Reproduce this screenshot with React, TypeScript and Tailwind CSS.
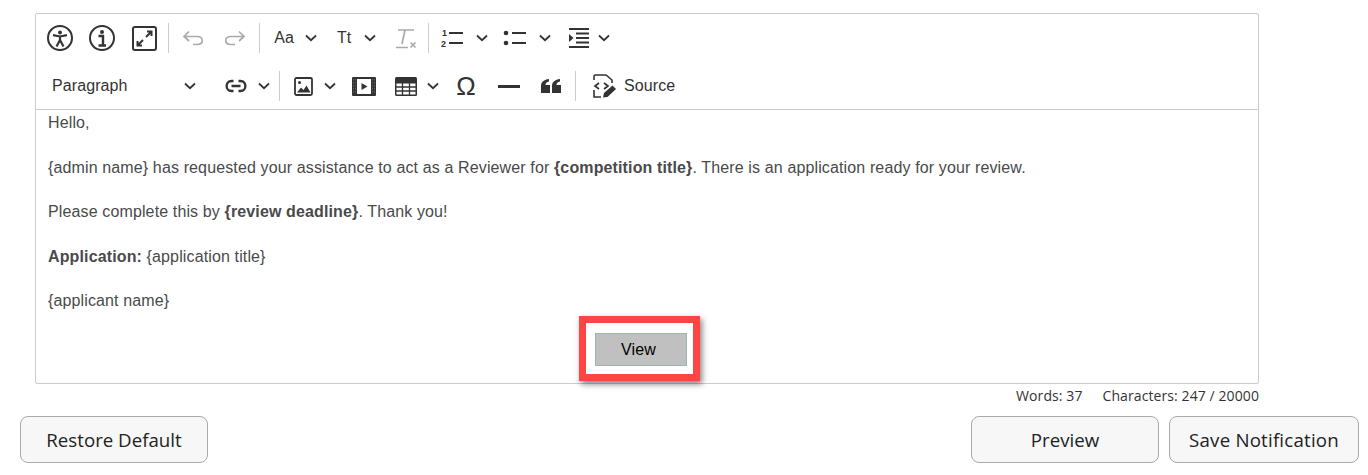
const Chevron = ({ className = "" }: { className?: string }) => (
  <svg viewBox="0 0 12 8" className={`w-[12px] h-[8px] ${className}`} fill="none" stroke="#333" strokeWidth="1.8">
    <path d="M1 1.5 L6 6.2 L11 1.5" />
  </svg>
);

const Sep = ({ className = "" }: { className?: string }) => <div className={`w-px h-[30px] bg-[#ccc] ${className}`} />;

const Slot = ({ className, children }: { className: string; children?: React.ReactNode }) => (
  <div className={`flex items-center justify-center shrink-0 h-[36px] ${className}`}>{children}</div>
);

const Icon = ({ w, h, children }: { w: number; h: number; children: React.ReactNode }) => (
  <svg width={w} height={h} viewBox={`0 0 ${w} ${h}`} fill="none">
    {children}
  </svg>
);

const DARK = "#333";
const GREY = "#aaa";

function EditorToolbar() {
  return (
    <div className="border-b border-[#ccc] h-[96px] flex flex-col">
      {/* first row */}
      <div className="flex items-center h-[36px] mt-[6px] pl-[3px]">
        <Slot className="w-[42px]">
          <Icon w={26} h={26}>
            <circle cx="13" cy="13" r="12" stroke={DARK} strokeWidth="2" />
            <circle cx="13" cy="7.5" r="2" fill={DARK} />
            <path d="M6 10.200 L13 11.500 L20 10.200 M13 11.500 V15 M13 15 L9.500 21.500 M13 15 L16.500 21.500" stroke={DARK} strokeWidth="2.200" />
          </Icon>
        </Slot>
        <Slot className="w-[42px]">
          <Icon w={26} h={26}>
            <circle cx="13" cy="13" r="12" stroke={DARK} strokeWidth="2" />
            <circle cx="13" cy="7" r="2" fill={DARK} />
            <path d="M9.500 11 H14 V20 M9.500 20.500 H17" stroke={DARK} strokeWidth="2.400" />
          </Icon>
        </Slot>
        <Slot className="w-[42px]">
          <Icon w={25} h={25}>
            <rect x="1" y="1" width="23" height="23" rx="2" stroke={DARK} strokeWidth="2" />
            <path d="M14 11 L19 6 M15 5.500 H19.500 V10 M11 14 L6 19 M5.500 15 V19.500 H10" stroke={DARK} strokeWidth="2" />
          </Icon>
        </Slot>
        <Sep className="ml-[3px]" />
        <Slot className="w-[42px] ml-[3px]">
          <Icon w={22} h={16}>
            <path d="M7 1.500 L2 6.500 L7 11 M2 6.500 H15 C22 6.500 22 14.500 15 14.500 H11" stroke={GREY} strokeWidth="1.700" />
          </Icon>
        </Slot>
        <Slot className="w-[42px]">
          <Icon w={22} h={16}>
            <path d="M15 1.500 L20 6.500 L15 11 M20 6.500 H7 C0 6.500 0 14.500 7 14.500 H11" stroke={GREY} strokeWidth="1.700" />
          </Icon>
        </Slot>
        <Sep className="ml-[3px]" />
        <Slot className="w-[38px] ml-[5px] font-['Liberation_Sans',sans-serif] text-[16px] text-[#333] font-medium">Aa</Slot>
        <Slot className="w-[20px] ml-[-2px]">
          <Chevron />
        </Slot>
        <Slot className="w-[28px] ml-[9px] font-['Liberation_Sans',sans-serif] text-[16px] text-[#333] font-medium">Tt</Slot>
        <Slot className="w-[20px] ml-[2px]">
          <Chevron />
        </Slot>
        <Slot className="w-[40px] ml-[6px]">
          <Icon w={24} h={22}>
            <path d="M4 3 H20 M11 3 L8 17" stroke={GREY} strokeWidth="1.700" />
            <path d="M2 20.500 H14" stroke={GREY} strokeWidth="1.500" />
            <path d="M16.500 15.500 L21.500 20.500 M21.500 15.500 L16.500 20.500" stroke={GREY} strokeWidth="1.700" />
          </Icon>
        </Slot>
        <Sep className="ml-[2px]" />
        <Slot className="w-[24px] ml-[12px]">
          <Icon w={24} h={20}>
            <text x="1" y="8" fontSize="9" fontWeight="700" fontFamily="Liberation Sans" fill={DARK}>1</text>
            <text x="0" y="19" fontSize="9" fontWeight="700" fontFamily="Liberation Sans" fill={DARK}>2</text>
            <path d="M8 5 H22 M8 15 H22" stroke={DARK} strokeWidth="2" />
          </Icon>
        </Slot>
        <Slot className="w-[20px] ml-[7px]">
          <Chevron />
        </Slot>
        <Slot className="w-[24px] ml-[11px]">
          <Icon w={24} h={20}>
            <circle cx="3" cy="5" r="2.300" fill={DARK} />
            <circle cx="3" cy="15" r="2.300" fill={DARK} />
            <path d="M9 5 H23 M9 15 H23" stroke={DARK} strokeWidth="2" />
          </Icon>
        </Slot>
        <Slot className="w-[20px] ml-[8px]">
          <Chevron />
        </Slot>
        <Slot className="w-[24px] ml-[12px]">
          <Icon w={20} h={20}>
            <path d="M0 1 H20 M7 5.500 H20 M7 10 H20 M7 14.500 H20 M0 19 H20" stroke={DARK} strokeWidth="2" />
            <path d="M0 6 L4.500 10 L0 14 Z" fill={DARK} />
          </Icon>
        </Slot>
        <Slot className="w-[20px] ml-[3px]">
          <Chevron />
        </Slot>
      </div>
      {/* second row */}
      <div className="flex items-center h-[36px] mt-[12px] pl-[16px]">
        <Slot className="w-[134px] justify-start! font-['Liberation_Sans',sans-serif] text-[16px] tracking-[0.1px] text-[#333]">Paragraph</Slot>
        <Slot className="w-[20px] ml-[-6px]">
          <Chevron />
        </Slot>
        <Slot className="w-[26px] ml-[23px]">
          <Icon w={22} h={14}>
            <path d="M8.500 2 H6.500 C0 2 0 12 6.500 12 H8.500 M13.500 2 H15.500 C22 2 22 12 15.500 12 H13.500 M6.500 7 H15.500" stroke={DARK} strokeWidth="2.300" />
          </Icon>
        </Slot>
        <Slot className="w-[20px] ml-[5px]">
          <Chevron />
        </Slot>
        <Sep className="ml-[5px]" />
        <Slot className="w-[20px] ml-[13px]">
          <Icon w={19} h={19}>
            <rect x="1" y="1" width="17" height="17" rx="1.500" stroke={DARK} strokeWidth="1.800" />
            <circle cx="5.500" cy="5.500" r="1.500" fill={DARK} />
            <path d="M3 15.500 L7 10.500 L9.500 13 L12.500 8.500 L16.500 15.500 Z" fill={DARK} />
          </Icon>
        </Slot>
        <Slot className="w-[20px] ml-[7px]">
          <Chevron />
        </Slot>
        <Slot className="w-[24px] ml-[12px]">
          <Icon w={24} h={19}>
            <rect x="0" y="0" width="24" height="19" rx="1" fill={DARK} />
            <rect x="5" y="2" width="14" height="15" fill="#fff" />
            <path d="M1.500 2 V17 M3.500 2 V17 M20.500 2 V17 M22.500 2 V17" stroke="#777" strokeWidth="0.600" strokeDasharray="1.500 1.500" />
            <path d="M9.500 6 L15.500 9.500 L9.500 13 Z" fill={DARK} />
          </Icon>
        </Slot>
        <Slot className="w-[22px] ml-[19px]">
          <Icon w={22} h={19}>
            <rect x="0" y="0" width="22" height="19" rx="1.500" fill={DARK} />
            <path d="M1.500 6.500 H20.500 V17.500 H1.500 Z" fill="#fff" />
            <path d="M1 10 H21 M1 14 H21 M7.500 6 V18 M14.500 6 V18" stroke={DARK} strokeWidth="1.300" />
          </Icon>
        </Slot>
        <Slot className="w-[20px] ml-[6px]">
          <Chevron />
        </Slot>
        <Slot className="w-[24px] ml-[11px] font-['Liberation_Sans',sans-serif] text-[26px] text-[#333]">Ω</Slot>
        <Slot className="w-[22px] ml-[20px]">
          <div className="w-[22px] h-[3px] bg-[#333]" />
        </Slot>
        <Slot className="w-[20px] ml-[21px]">
          <Icon w={20} h={16}>
            <path d="M0 15 V8 C0 4 3 1.500 8 1 V3.500 C5.500 4 4.500 5 4.500 7 H9 V15 Z M11 15 V8 C11 4 14 1.500 19 1 V3.500 C16.500 4 15.500 5 15.500 7 H20 V15 Z" fill={DARK} />
          </Icon>
        </Slot>
        <Sep className="ml-[14px]" />
        <Slot className="w-[26px] ml-[15px]">
          <Icon w={25} h={26}>
            <path d="M2 7 V3 L3 2 H14 L20 7 V10 M2 17 V24 H9" stroke={DARK} strokeWidth="1.600" />
            <path d="M7 10 L3 13 L7 16 M12 10 L16 13 L12 16" stroke={DARK} strokeWidth="1.700" />
            <path d="M11 24.500 L12 20 L20.500 12.500 L24 16 L15.500 24 Z" fill={DARK} />
          </Icon>
        </Slot>
        <div className="ml-[7px] font-['Liberation_Sans',sans-serif] text-[16px] tracking-[0.1px] text-[#333]">Source</div>
      </div>
    </div>
  );
}

export default function App() {
  return (
    <div className="w-[1368px] h-[475px] bg-white overflow-hidden pt-[13px] font-['Open_Sans',sans-serif] text-[#222]">
      <div className="ml-[35px] w-[1224px] h-[371px] border border-[#ccc] rounded-[2px] flex flex-col">
        <EditorToolbar />
        <div className="pl-[12px] pr-[28px] pt-[1.4px] font-['Liberation_Sans',sans-serif] text-[16px] tracking-[0.13px] leading-[24px] text-[#4a4a4a]">
          <p className="mb-[20.4px]">Hello,</p>
          <p className="mb-[20.4px]">
            {"{admin name} has requested your assistance to act as a Reviewer for "}
            <b>{"{competition title}"}</b>. There is an application ready for your review.
          </p>
          <p className="mb-[20.4px]">
            {"Please complete this by "}
            <b>{"{review deadline}"}</b>. Thank you!
          </p>
          <p className="mb-[20.4px]">
            <b>Application:</b> {"{application title}"}
          </p>
          <p>{"{applicant name}"}</p>
          <div className="flex justify-center mt-[2.6px]">
            <div className="border-[7px] border-[#ff4444] bg-white pt-[10px] pl-[9px] pr-[6px] shadow-[2px_3px_6px_rgba(0,0,0,0.5)] w-[121px] h-[65px]">
              <div className="h-[33px] border border-[#9fb3b3] bg-[#c0c0c0] flex items-center justify-center pr-[4px] pt-[2px] text-black">View</div>
            </div>
          </div>
        </div>
      </div>
      <div className="w-[1259px] text-right text-[14px] tracking-[0.09px] leading-[20px] mt-[2px] flex justify-end gap-[20px] text-[#333]">
        <span>Words: 37</span>
        <span>Characters: 247 / 20000</span>
      </div>
      <div className="flex mt-[10px] pl-[20px] pr-[9px] text-[18.7px]">
        <button className="w-[188px] h-[47px] pt-[2px] border border-[#aaa] rounded-[8px] bg-[#f7f7f7]">Restore Default</button>
        <button className="w-[188px] h-[47px] pt-[2px] border border-[#aaa] rounded-[8px] bg-[#f7f7f7] ml-auto">Preview</button>
        <button className="w-[190px] h-[47px] pt-[2px] border border-[#aaa] rounded-[8px] bg-[#f7f7f7] ml-[10px] tracking-[0.2px]">Save Notification</button>
      </div>
    </div>
  );
}
